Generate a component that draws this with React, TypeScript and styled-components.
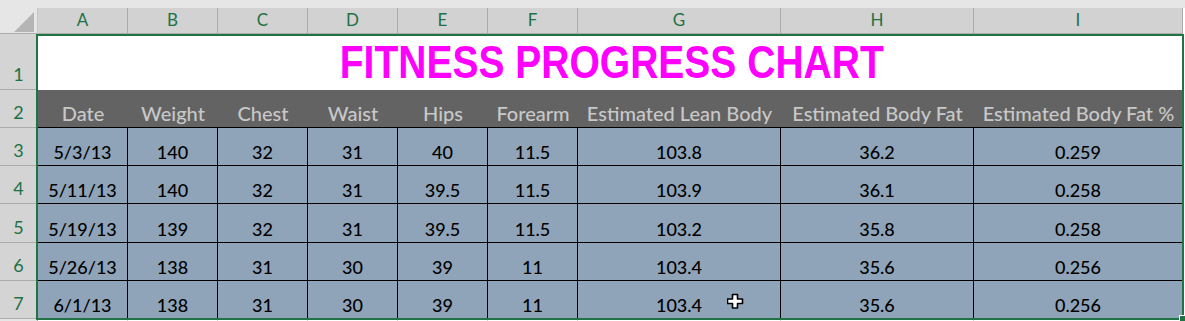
import styled, { createGlobalStyle } from 'styled-components';

const GlobalStyle = createGlobalStyle`
    html, body { margin:0; padding:0; background:#fff; overflow:hidden; }
    #root { width:1185px; height:321px; }
`;

const COLUMNS = ['A','B','C','D','E','F','G','H','I'];
const COLUMN_WIDTHS = [90,90,90,90,90,90,203,193,209];
const HEADERS = ['Date','Weight','Chest','Waist','Hips','Forearm','Estimated Lean Body','Estimated Body Fat','Estimated Body Fat %'];
const ROW_HEIGHTS = [38,38,39,38,38];

const DATA = [
    ['5/3/13','140','32','31','40','11.5','103.8','36.2','0.259'],
    ['5/11/13','140','32','31','39.5','11.5','103.9','36.1','0.258'],
    ['5/19/13','139','32','31','39.5','11.5','103.2','35.8','0.258'],
    ['5/26/13','138','31','30','39','11','103.4','35.6','0.256'],
    ['6/1/13','138','31','30','39','11','103.4','35.6','0.256'],
];

const App = () => {
    return <Page>
        <GlobalStyle />
        <TopStrip />
        <Sheet>
            <Corner />
            {COLUMNS.map((c)=> <ColHeader key={c}>{c}</ColHeader>)}

            <RowHeader>1</RowHeader>
            <TitleCell><TitleText>FITNESS PROGRESS CHART</TitleText></TitleCell>

            <RowHeader>2</RowHeader>
            {HEADERS.map((h)=> <HeadCell key={h}>{h}</HeadCell>)}

            {DATA.map((row,i)=> <Row key={i}>
                <RowHeader>{i+3}</RowHeader>
                {row.map((v,j)=> <DataCell key={j}>{v}</DataCell>)}
            </Row>)}

            <RowHeader $stub />
            {COLUMNS.map((c)=> <EmptyCell key={c} />)}
        </Sheet>
        <Selection><FillHandle /></Selection>
        <Cursor width="17" height="16" viewBox="0 0 17 16">
            <path d="M5.5 1.5h5v4.5h5v4.5h-5v4.5h-5v-4.5h-5v-4.5h5z" fill="#fff" stroke="#000" strokeWidth="1.6" strokeLinejoin="round" />
        </Cursor>
    </Page>
}

const Page = styled.div`
    position:relative;width:1185px;height:321px;overflow:hidden;
    font-family:Lato,"Open Sans",sans-serif;
`

const TopStrip = styled.div`
    height:8px;background:#e6e6e6;
`

const Sheet = styled.div`
    display:grid;
    grid-template-columns:38px ${COLUMN_WIDTHS.map((w)=>`${w}px`).join(' ')};
    grid-template-rows:26px 56px 38px ${ROW_HEIGHTS.map((h)=>`${h}px`).join(' ')} 6px;
`

const Row = styled.div`
    display:contents;
`

const Corner = styled.div`
    position:relative;background:#e6e6e6;border-right:1px solid #c6c6c6;border-bottom:1px solid #ababab;
    &::after {
        content:'';position:absolute;right:3px;bottom:1px;width:0;height:0;
        border-style:solid;border-width:0 0 20px 20px;
        border-color:transparent transparent #b5b5b5 transparent;
    }
`

const ColHeader = styled.div`
    display:flex;align-items:flex-end;justify-content:center;padding-bottom:4px;
    background:#d2d2d2;border-right:1px solid #ababab;border-bottom:1px solid #ababab;
    color:#1e7145;font-size:17px;line-height:18px;
`

const RowHeader = styled.div<{ $stub?: boolean }>`
    display:flex;align-items:flex-end;justify-content:center;padding-bottom:${({$stub})=>$stub ? 0 : 6}px;
    background:${({$stub})=>$stub ? '#e6e6e6' : '#d4d4d4'};border-bottom:1px solid #ababab;border-right:1px solid #ababab;
    color:#1e7145;font-size:18px;line-height:18px;overflow:hidden;
`

const TitleCell = styled.div`
    grid-column:2 / -1;
    display:flex;align-items:flex-end;justify-content:center;padding-bottom:3px;padding-left:2px;
    background:#fff;color:#ff00ff;
    font-family:"Liberation Sans",Arial,sans-serif;font-weight:700;font-size:47px;line-height:50px;
`

const TitleText = styled.span`
    display:inline-block;white-space:nowrap;transform:scaleX(0.83);
`

const HeadCell = styled.div`
    display:flex;align-items:flex-end;justify-content:center;padding-bottom:2px;
    background:#636363;color:#c8c8c8;border-bottom:1px solid #000;
    font-size:20px;line-height:24px;font-weight:500;white-space:nowrap;
`

const DataCell = styled.div`
    display:flex;align-items:flex-end;justify-content:center;padding-bottom:2px;
    background:#8fa4b8;color:#000;border-right:1px solid #000;border-bottom:1px solid #000;
    font-size:18px;line-height:22px;font-weight:500;white-space:nowrap;
`

const EmptyCell = styled.div`
    background:#fff;border-right:1px solid #d4d4d4;
`

const Selection = styled.div`
    position:absolute;left:36px;top:34px;width:1148px;height:286px;box-sizing:border-box;
    border:2px solid #217346;pointer-events:none;
`

const FillHandle = styled.div`
    position:absolute;right:-5px;bottom:-5px;width:6px;height:6px;
    background:#217346;border:1px solid #fff;
`

const Cursor = styled.svg`
    position:absolute;left:727px;top:293px;
`

export default App;
